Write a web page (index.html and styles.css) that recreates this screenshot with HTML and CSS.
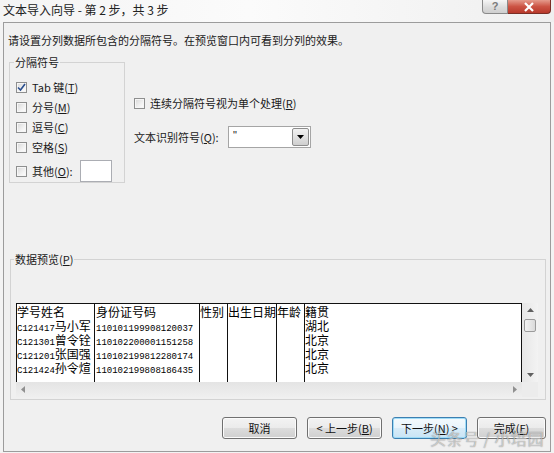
FILE: index.html
```html
<!DOCTYPE html>
<html lang="zh-CN">
  <head>
    <meta charset="UTF-8" />
    <meta name="viewport" content="width=device-width, initial-scale=1.0" />
    <title>文本导入向导</title>
    <link rel="stylesheet" href="styles.css">
  </head>
  <body>
    <div class="window">
      <div class="titlebar">
        <span class="title">文本导入向导 - 第 2 步，共 3 步</span>
        <div class="caption-btns">
          <span class="cap-help">?</span>
          <span class="cap-close">
            <svg width="12" height="10" viewBox="0 0 12 10">
              <path d="M2 1 L10 9 M10 1 L2 9" stroke="#fff" stroke-width="2.2" />
            </svg>
          </span>
        </div>
      </div>

      <div class="dialog">
        <p class="hint">请设置分列数据所包含的分隔符号。在预览窗口内可看到分列的效果。</p>

        <div class="options">
          <fieldset class="group sep-group">
            <legend>分隔符号</legend>
            <label class="check">
              <span class="box">
                <svg width="9" height="9" viewBox="0 0 9 9">
                  <path d="M1 4.5 L3.5 7 L8 1" fill="none" stroke="#2a4f8f" stroke-width="1.6" />
                </svg>
              </span>
              Tab 键(<u>T</u>)
            </label>
            <label class="check"><span class="box"></span>分号(<u>M</u>)</label>
            <label class="check"><span class="box"></span>逗号(<u>C</u>)</label>
            <label class="check"><span class="box"></span>空格(<u>S</u>)</label>
            <label class="check other">
              <span class="box"></span>其他(<u>O</u>):
              <span class="other-input"></span>
            </label>
          </fieldset>

          <div class="opts-right">
            <label class="check merge"><span class="box"></span>连续分隔符号视为单个处理(<u>R</u>)</label>
            <div class="qualifier">
              <span class="qualifier-label">文本识别符号(<u>Q</u>):</span>
              <div class="combo">
                <span class="combo-val">"</span>
                <span class="combo-btn">
                  <svg width="7" height="4" viewBox="0 0 7 4"><path d="M0 0 H7 L3.5 4 Z" fill="#000" /></svg>
                </span>
              </div>
            </div>
          </div>
        </div>

        <fieldset class="group preview-group">
          <legend>数据预览(<u>P</u>)</legend>
          <div class="preview">
            <div class="preview-main">
              <div class="grid">
                <div class="col c1">
                  <div>学号姓名</div>
                  <div><span class="num">C121417</span>马小军</div>
                  <div><span class="num">C121301</span>曾令铨</div>
                  <div><span class="num">C121201</span>张国强</div>
                  <div><span class="num">C121424</span>孙令煊</div>
                </div>
                <div class="col c2">
                  <div>身份证号码</div>
                  <div><span class="num">110101199908120037</span></div>
                  <div><span class="num">110102200001151258</span></div>
                  <div><span class="num">110102199812280174</span></div>
                  <div><span class="num">110102199808186435</span></div>
                </div>
                <div class="col c3"><div>性别</div></div>
                <div class="col c4"><div>出生日期</div></div>
                <div class="col c5"><div>年龄</div></div>
                <div class="col c6">
                  <div>籍贯</div>
                  <div>湖北</div>
                  <div>北京</div>
                  <div>北京</div>
                  <div>北京</div>
                </div>
              </div>
              <div class="vscroll">
                <svg width="7" height="4" viewBox="0 0 7 4"><path d="M0 4 H7 L3.5 0 Z" fill="#606060" /></svg>
                <span class="thumb"></span>
                <span class="vscroll-fill"></span>
                <svg width="7" height="4" viewBox="0 0 7 4"><path d="M0 0 H7 L3.5 4 Z" fill="#606060" /></svg>
              </div>
            </div>
            <div class="hscroll-row">
              <div class="hscroll">
                <svg width="4" height="7" viewBox="0 0 4 7"><path d="M4 0 V7 L0 3.5 Z" fill="#909090" /></svg>
                <svg width="4" height="7" viewBox="0 0 4 7"><path d="M0 0 V7 L4 3.5 Z" fill="#909090" /></svg>
              </div>
              <div class="corner"></div>
            </div>
          </div>
        </fieldset>

        <div class="actions">
          <button class="btn">取消</button>
          <button class="btn">&lt; 上一步(<u>B</u>)</button>
          <button class="btn default">下一步(<u>N</u>) &gt;</button>
          <button class="btn finish">完成(<u>F</u>)</button>
        </div>

        <span class="watermark">头条号 / 小培园</span>
      </div>
    </div>
  </body>
</html>
```

FILE: styles.css
```css
body {
  margin: 0;
  width: 554px;
  height: 453px;
  overflow: hidden;
  background: #f3f3f3;
  font-family: "Noto Sans CJK SC", "Liberation Sans", sans-serif;
  font-size: 11px;
  color: #1a1a1a;
}

.window {
  height: 453px;
}

/* title bar */
.titlebar {
  height: 22px;
  display: flex;
  justify-content: space-between;
  align-items: flex-start;
  background: linear-gradient(to right, #f4f4f4, #fbfbfb 45%, #efefef);
}
.title {
  line-height: 20px;
  padding-left: 3px;
  font-size: 12px;
  color: #222;
}
.caption-btns {
  display: flex;
  margin-right: 3px;
}
.cap-help {
  width: 24px;
  height: 13px;
  border: 1px solid #8a8a8a;
  border-top: none;
  border-radius: 0 0 0 4px;
  background: linear-gradient(#f6f6f6, #dcdcdc 55%, #cfcfcf);
  color: #7a7a7a;
  font-family: "Liberation Sans", sans-serif;
  font-size: 11px;
  font-weight: bold;
  line-height: 13px;
  text-align: center;
}
.cap-close {
  width: 42px;
  height: 13px;
  border: 1px solid #7a2e25;
  border-left: none;
  border-top: none;
  border-radius: 0 0 4px 0;
  background: linear-gradient(#e59b8c, #cc5444 50%, #b8392b);
  display: flex;
  justify-content: center;
  align-items: center;
}

/* dialog body */
.dialog {
  position: relative;
  box-sizing: border-box;
  width: 548px;
  height: 430px;
  margin-left: 3px;
  padding: 0 4px;
  border: 1px solid #9c9c9c;
  background: #f0f0f0;
}
.hint {
  margin: 9px 0 0;
  line-height: 16px;
}

.options {
  display: flex;
  margin-top: 6px;
}

.group {
  margin: 0;
  padding: 0;
  border: 1px solid #d3d3d3;
  min-width: 0;
}
.group legend {
  padding: 0 1px;
  margin-left: -2px;
  line-height: 16px;
}

.sep-group {
  width: 116px;
  box-sizing: border-box;
  margin-left: 1px;
  padding: 7px 0 0 6px;
}

.check {
  display: flex;
  align-items: center;
  height: 20px;
  white-space: nowrap;
}
.box {
  box-sizing: border-box;
  width: 11px;
  height: 11px;
  margin-right: 5px;
  border: 1px solid #8e8f8f;
  background: linear-gradient(135deg, #d6d6d6, #f2f2f2 60%, #ffffff);
  box-shadow: inset 0 0 0 1px #f6f6f6;
  display: flex;
  justify-content: center;
  align-items: center;
}
.check.other {
  height: 22px;
  margin-top: 3px;
}
.other-input {
  width: 30px;
  height: 20px;
  margin-left: 7px;
  border: 1px solid #abadb3;
  background: #fff;
}

.opts-right {
  margin-left: 9px;
}
.check.merge {
  margin-top: 39px;
}
.qualifier {
  display: flex;
  align-items: center;
  margin-top: 13px;
  height: 22px;
}
.qualifier-label {
  width: 94px;
}
.combo {
  box-sizing: border-box;
  width: 83px;
  height: 22px;
  display: flex;
  border: 1px solid #a5a5a5;
  background: #fff;
}
.combo-val {
  flex: 1;
  padding-left: 4px;
  line-height: 16px;
  font-family: "Liberation Sans", sans-serif;
}
.combo-btn {
  width: 15px;
  margin: 1px;
  border: 1px solid #8d8d8d;
  border-radius: 2px;
  background: linear-gradient(#f2f2f2, #e2e2e2 50%, #cfcfcf);
  display: flex;
  justify-content: center;
  align-items: center;
}

/* data preview */
.preview-group {
  margin: 68px 0 0 2px;
  padding: 36px 7px 2px 5px;
}
.preview-main {
  display: flex;
}
.grid {
  display: flex;
  height: 78px;
  width: 505px;
  border-top: 1px solid #111;
  border-right: 1px solid #111;
  background: #fff;
  overflow: hidden;
  font-size: 12px;
  color: #000;
}
.col {
  border-left: 1px solid #111;
  padding-top: 1px;
  line-height: 14px;
  white-space: nowrap;
}
.col div {
  height: 14px;
}
.c1 { width: 77px; }
.c2 { width: 103px; padding-left: 1px; }
.c3 { width: 27px; }
.c4 { width: 48px; }
.c5 { width: 27px; }
.c6 { flex: 1; }
.num {
  font-family: "Liberation Mono", monospace;
  font-size: 9px;
}

.vscroll {
  width: 16px;
  display: flex;
  flex-direction: column;
  align-items: center;
  padding: 5px 0 5px;
  box-sizing: border-box;
  background: linear-gradient(to right, #e6e6e6, #f3f3f3);
}
.thumb {
  width: 12px;
  height: 13px;
  margin-top: 7px;
  box-sizing: border-box;
  border: 1px solid #9b9b9b;
  border-radius: 2px;
  background: linear-gradient(to right, #f4f4f4, #dadada);
}
.vscroll-fill {
  flex: 1;
}

.hscroll-row {
  display: flex;
  height: 15px;
}
.hscroll {
  width: 506px;
  display: flex;
  justify-content: space-between;
  align-items: center;
  padding: 0 5px;
  box-sizing: border-box;
  background: linear-gradient(#e4e4e4, #efefef);
}
.corner {
  flex: 1;
  background: #ececec;
}

/* buttons */
.actions {
  display: flex;
  justify-content: flex-end;
  gap: 10px;
  margin-top: 17px;
}
.btn {
  width: 75px;
  height: 22px;
  padding: 0;
  border: 1px solid #707070;
  border-radius: 3px;
  background: linear-gradient(#f3f3f3, #ebebeb 50%, #dddddd 51%, #cfcfcf);
  box-shadow: inset 0 0 0 1px #fbfbfb;
  font-family: inherit;
  font-size: 11px;
  color: #111;
}
.btn.default {
  border-color: #3c7fb1;
  background: linear-gradient(#f4fafd, #e8f4fb 50%, #d8ecf8 51%, #c9e4f5);
  box-shadow: inset 0 0 0 1px #9fdcf7;
}
.btn.finish {
  width: 69px;
}

.watermark {
  position: absolute;
  left: 426px;
  top: 403px;
  font-size: 16px;
  color: rgba(255, 255, 255, 0.55);
  text-shadow: 0 0 1px rgba(60, 60, 60, 0.7);
  letter-spacing: 0.5px;
}
```
